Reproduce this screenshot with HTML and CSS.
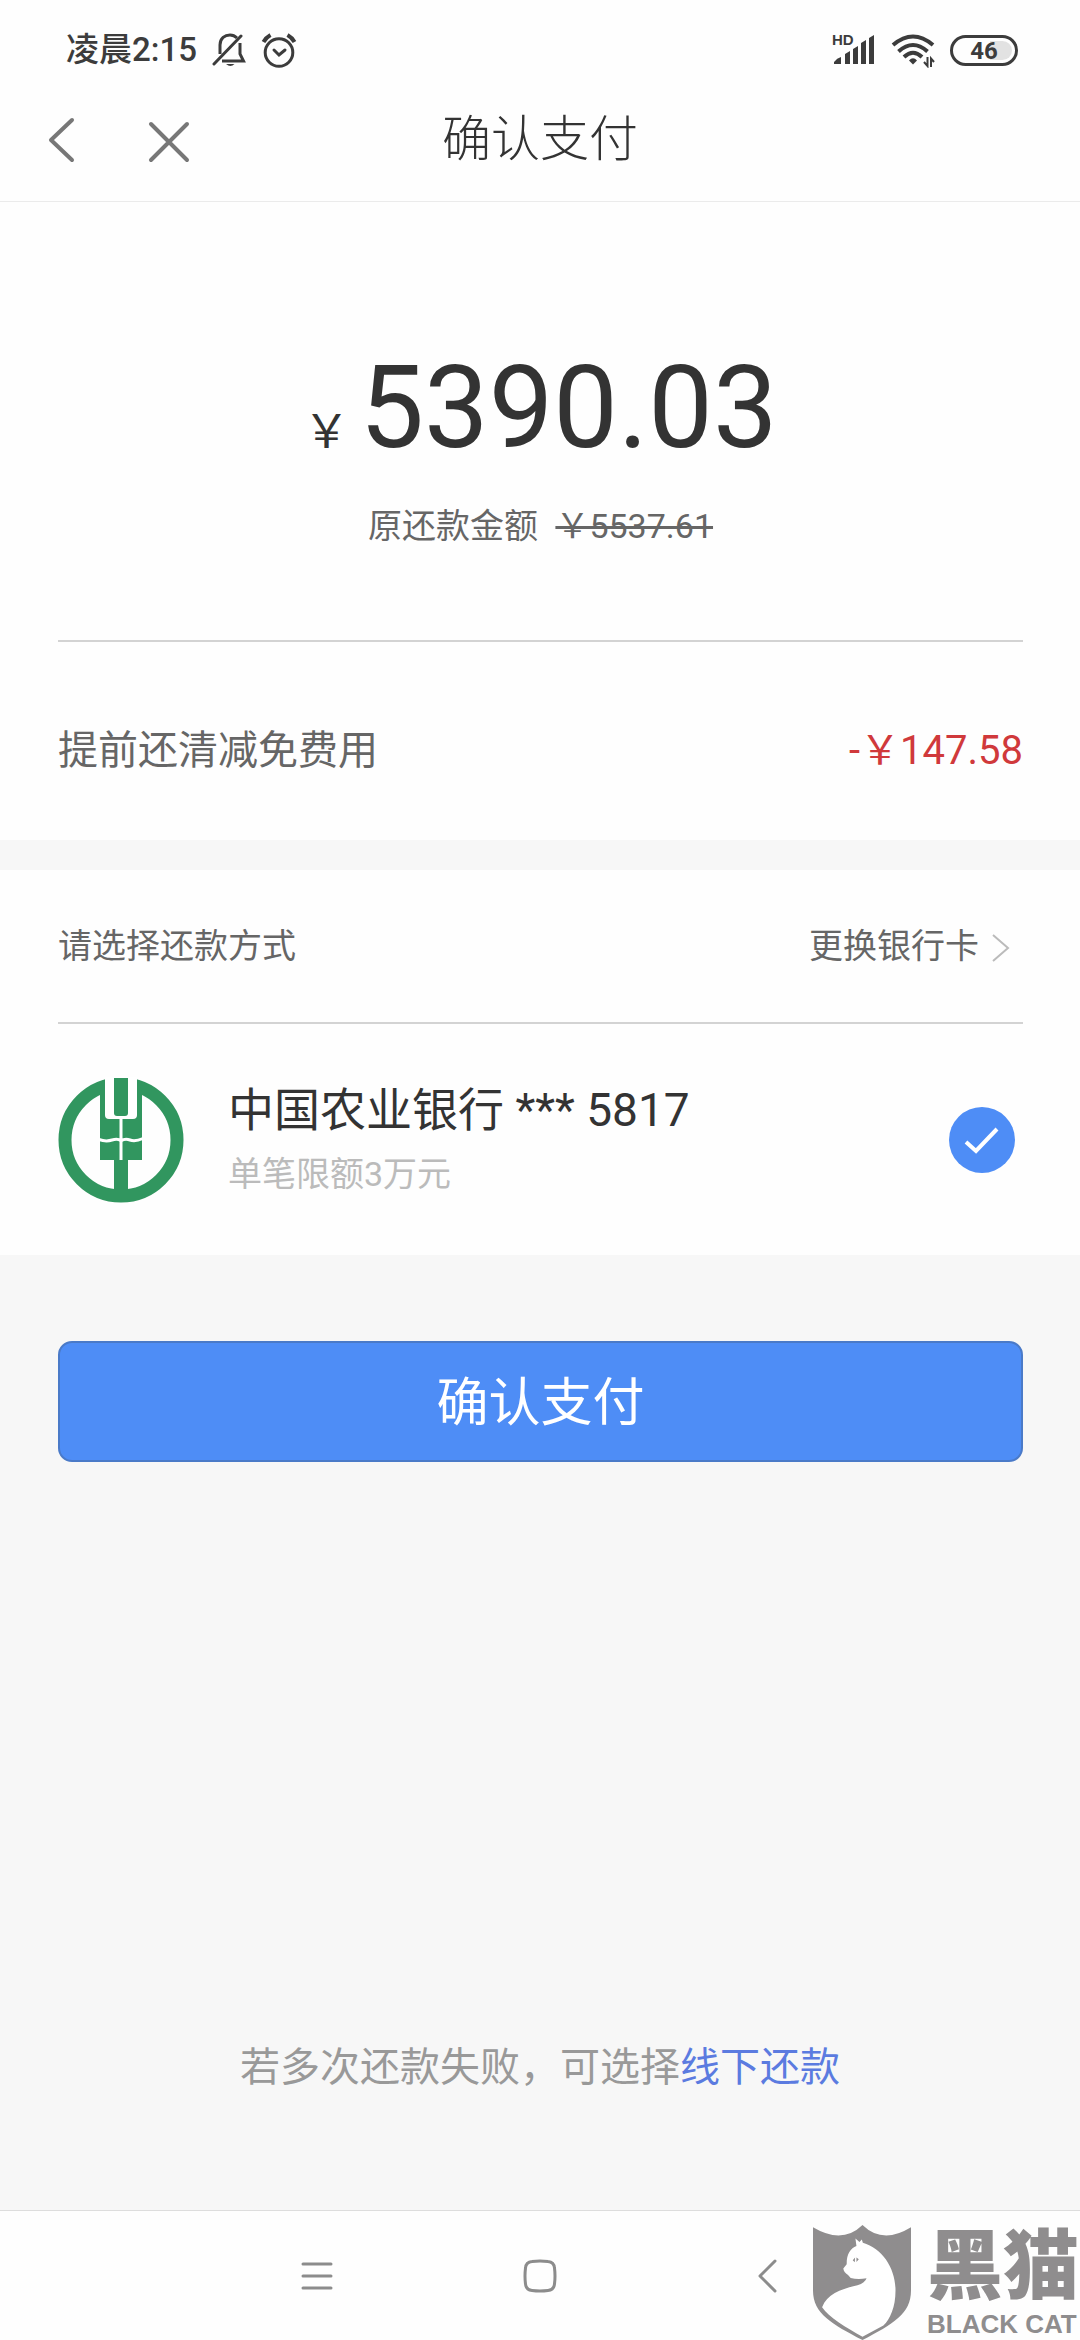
FILE: index.html
```html
<!DOCTYPE html>
<html lang="zh-CN">
<head>
<meta charset="UTF-8">
<meta name="viewport" content="width=device-width, initial-scale=1.0">
<title>确认支付</title>
<link rel="stylesheet" href="styles.css">
</head>
<body>
<div class="status-bar">
<div class="status-left">
<span class="time">凌晨2:15</span>
<svg class="icon-bell" width="34" height="36" viewBox="212 32 34 36" fill="none" stroke="#3c3c3c" stroke-width="3">
<path d="M214 64L241 36" stroke-linecap="round"/>
<path d="M220 54V45C220 38 225 35 230 35Q234 35 237 38"/>
<path d="M222 61H243.500L240 54V43"/>
<path d="M226 64H234.500Q230.500 68 226 64Z" fill="#3c3c3c" stroke="none"/>
</svg>
<svg width="36" height="36" viewBox="261 32 36 36" fill="none" stroke="#3c3c3c" stroke-width="3">
<circle cx="279" cy="52.500" r="13.800"/>
<path d="M274 50L279 55L285 50" stroke-linecap="round"/>
<path d="M263.500 42Q266 37.500 270.500 35M294.500 42Q292 37.500 287.500 35" stroke-width="4"/>
</svg>
</div>
<div class="status-right">
<svg width="44" height="44" viewBox="832 27 44 44" fill="#3c3c3c">
<text class="hd" x="832" y="44">HD</text>
<path d="M834 63V61Q837 57 841 56V63ZM845 63V53L850 50V63ZM853 63V48L858 45V63ZM861 63V42L866 39V63ZM869 63V37L874 34V63Z"/>
</svg>
<svg width="44" height="36" viewBox="889 32 44 36" fill="none" stroke="#3c3c3c" stroke-width="4">
<path d="M891 45Q911 28 931 45M896.500 51.500Q911 38.500 925.500 51.500M902 57Q911 48.500 920 57"/>
<path d="M907 60.500Q911 56 915 60.500L911 64.500Z" fill="#3c3c3c" stroke="none"/>
<path d="M925.500 57V66L922 62M929 67V58.500L932 62" stroke-width="2"/>
</svg>
<span class="battery">46</span>
</div>
</div>

<header class="header">
<button class="icon-button" aria-label="返回">
<svg width="28" height="48" viewBox="48 115 28 48" fill="none" stroke="#777" stroke-width="4" stroke-linecap="round" stroke-linejoin="round"><path d="M72 119L51 139L72 159"/></svg>
</button>
<button class="icon-button" aria-label="关闭">
<svg width="44" height="48" viewBox="147 117 44 48" fill="none" stroke="#777" stroke-width="4" stroke-linecap="round"><path d="M151 125L187 161M187 125L151 161"/></svg>
</button>
<h1 class="title">确认支付</h1>
</header>

<main class="main">
<section class="card">
<div class="amount">
<span class="currency">￥</span><span class="number">5390.03</span>
</div>
<p class="original">原还款金额 <del>￥5537.61</del></p>
<div class="row discount">
<span>提前还清减免费用</span>
<span class="minus">-￥147.58</span>
</div>
</section>

<section class="card">
<div class="row method">
<span>请选择还款方式</span>
<a href="#" class="change">更换银行卡
<svg width="20" height="32" viewBox="0 0 20 32" fill="none" stroke="#bbb" stroke-width="2"><path d="M2 5L17 18L2 31"/></svg>
</a>
</div>
<label class="bank">
<svg class="bank-logo" width="126" height="126" viewBox="0 0 126 126">
<circle cx="63" cy="63" r="56" fill="none" stroke="#31965f" stroke-width="13"/>
<path d="M47 0H79V30H47Z" fill="#fff"/>
<path d="M42 15L47 2V38Q47 42 51 42H75Q79 42 79 38V2L84 15V83H42Z" fill="#31965f"/>
<path d="M47 0V36Q47 40 51 40H75Q79 40 79 36V0Z" fill="#fff"/>
<path d="M56 1H70V36Q70 39 67 39H59Q56 39 56 36Z" fill="#31965f"/>
<path d="M56 82H70V118H56Z" fill="#31965f"/>
<path d="M63 41V83M41 62.500Q48 65 54 63T63 64Q67 61 72 63T85 61.500" fill="none" stroke="#fff" stroke-width="3"/>
</svg>
<span class="bank-info">
<span class="bank-name">中国农业银行 *** 5817</span>
<span class="bank-limit">单笔限额3万元</span>
</span>
<input type="radio" name="bank" class="bank-radio" checked>
<svg class="bank-check" width="66" height="66" viewBox="0 0 66 66">
<circle cx="33" cy="33" r="33" fill="#4e8df6"/>
<path d="M17 35L27 44L48 22" fill="none" stroke="#fff" stroke-width="4"/>
</svg>
</label>
</section>

<button class="pay-button">确认支付</button>

<p class="hint">若多次还款失败，可选择<a href="#">线下还款</a></p>
</main>

<nav class="system-nav">
<button class="icon-button" aria-label="菜单">
<svg width="36" height="36" viewBox="0 0 36 36" stroke="#8c8c8c" stroke-width="3" stroke-linecap="round"><path d="M4 6H32M4 18H32M4 30H32"/></svg>
</button>
<button class="icon-button" aria-label="主页">
<svg width="36" height="36" viewBox="0 0 36 36" fill="none" stroke="#8c8c8c" stroke-width="3"><path d="M10 3.500Q18 2.500 26 3.500Q32 4 32.500 10Q33.500 18 32.500 26Q32 32 26 32.500Q18 33.500 10 32.500Q4 32 3.500 26Q2.500 18 3.500 10Q4 4 10 3.500Z"/></svg>
</button>
<button class="icon-button" aria-label="返回">
<svg width="36" height="36" viewBox="0 0 36 36" fill="none" stroke="#8c8c8c" stroke-width="3" stroke-linecap="round" stroke-linejoin="round"><path d="M30 3L15 18L30 33"/></svg>
</button>

<div class="watermark">
<svg width="98" height="115" viewBox="93 105 291 343" preserveAspectRatio="none">
<path d="M93 112Q180 164 240 105Q300 164 384 112V300C384 370 330 400 240 448C150 400 93 370 93 300Z" fill="#8f8d8e"/>
<path d="M219 145L231 156L238 148L241 158C300 175 338 235 338 300C338 350 322 385 302 405L240 438C190 410 140 380 120 350C135 310 180 295 225 285Q248 278 252 264Q225 268 205 263L197 254Q184 246 183 235L193 222C193 190 205 175 222 168Z" fill="#fff"/>
<path d="M211 210L218 202L217 216ZM222 202L229 207L222 215Z" fill="#8f8d8e"/>
</svg>
<div class="brand">
<span class="brand-cn">黑猫</span>
<span class="brand-en">BLACK CAT</span>
</div>
</div>
</nav>
</body>
</html>
```

FILE: styles.css
```css
* {
box-sizing: border-box;
}
body {
font-family: Roboto, 'Noto Sans CJK SC', sans-serif;
margin: 0;
min-height: 100vh;
display: flex;
flex-direction: column;
background: #f7f7f7;
color: #333;
}
svg {
display: block;
flex: none;
}
a {
color: inherit;
text-decoration: none;
}
.status-bar {
display: flex;
justify-content: space-between;
align-items: center;
height: 100px;
padding: 0 62px 0 66px;
background: #fefefe;
color: #3c3c3c;
}
.status-left,
.status-right {
display: flex;
align-items: center;
gap: 15px;
}
.time {
font-size: 33px;
font-weight: 500;
line-height: 40px;
}
.hd {
font: bold 15px 'Liberation Sans', sans-serif;
}
.battery {
width: 68px;
height: 31px;
border: 3px solid #3c3c3c;
border-radius: 16px;
background: linear-gradient(90deg, #fefefe 60%, #e2e2e2 60%) content-box;
padding: 3px;
font-size: 24px;
font-weight: 700;
line-height: 20px;
text-align: center;
}
.icon-button {
background: none;
border: none;
padding: 0;
cursor: pointer;
}
.header {
position: relative;
display: flex;
align-items: center;
gap: 71px;
height: 102px;
padding: 0 48px 22px;
background: #fefefe;
border-bottom: 1px solid #ebebeb;
}
.title {
position: absolute;
left: 50%;
transform: translateX(-50%);
margin: 0;
font-size: 49px;
font-weight: 300;
line-height: 60px;
}
.main {
flex: 1;
display: flex;
flex-direction: column;
}
.card {
background: #fefefe;
padding: 0 57px 0 58px;
margin-bottom: 30px;
}
.amount {
display: flex;
justify-content: center;
align-items: baseline;
gap: 10px;
padding-top: 136px;
line-height: 140px;
}
.currency {
font-size: 46px;
}
.number {
font-size: 115px;
}
.original {
margin: 0;
padding: 0 0 89px;
font-size: 34px;
line-height: 50px;
text-align: center;
color: #666;
border-bottom: 2px solid #d3d3d3;
}
.original del {
margin-left: 9px;
}
.row {
display: flex;
justify-content: space-between;
align-items: center;
color: #666;
}
.discount {
height: 198px;
padding-top: 20px;
font-size: 40px;
line-height: 60px;
}
.discount .minus {
color: #d0393b;
}
.method {
height: 154px;
font-size: 34px;
line-height: 50px;
border-bottom: 2px solid #d3d3d3;
}
.change {
display: flex;
align-items: center;
gap: 12px;
padding-right: 12px;
}
.bank {
display: flex;
align-items: center;
height: 231px;
padding-right: 8px;
cursor: pointer;
}
.bank-info {
flex: 1;
display: flex;
flex-direction: column;
padding-left: 44px;
}
.bank-name {
font-size: 46px;
line-height: 68px;
}
.bank-limit {
font-size: 34px;
line-height: 60px;
color: #bbb;
}
.bank-radio {
position: absolute;
opacity: 0;
}
.pay-button {
margin: 56px 57px 0 58px;
height: 121px;
padding: 0 0 6px;
font-family: inherit;
font-size: 52px;
color: white;
background: #4e8df6;
border: 2px solid #4a7ac8;
border-radius: 14px;
cursor: pointer;
}
.hint {
margin: auto 0 0;
padding-bottom: 112px;
font-size: 40px;
line-height: 60px;
text-align: center;
color: #999;
}
.hint a {
color: #5b7be0;
}
.system-nav {
position: relative;
display: flex;
justify-content: center;
align-items: center;
gap: 187px;
height: 130px;
background: #fefefe;
border-top: 1px solid #ddd;
}
.watermark {
position: absolute;
right: 1px;
bottom: 0;
display: flex;
gap: 16px;
color: #8f8d8e;
}
.brand {
display: flex;
flex-direction: column;
gap: 14px;
}
.brand-cn {
font-family: 'Noto Sans CJK SC', sans-serif;
font-size: 76px;
font-weight: 900;
line-height: 70px;
}
.brand-en {
font-family: 'Liberation Sans', sans-serif;
font-size: 26px;
font-weight: 700;
line-height: 30px;
}
```
